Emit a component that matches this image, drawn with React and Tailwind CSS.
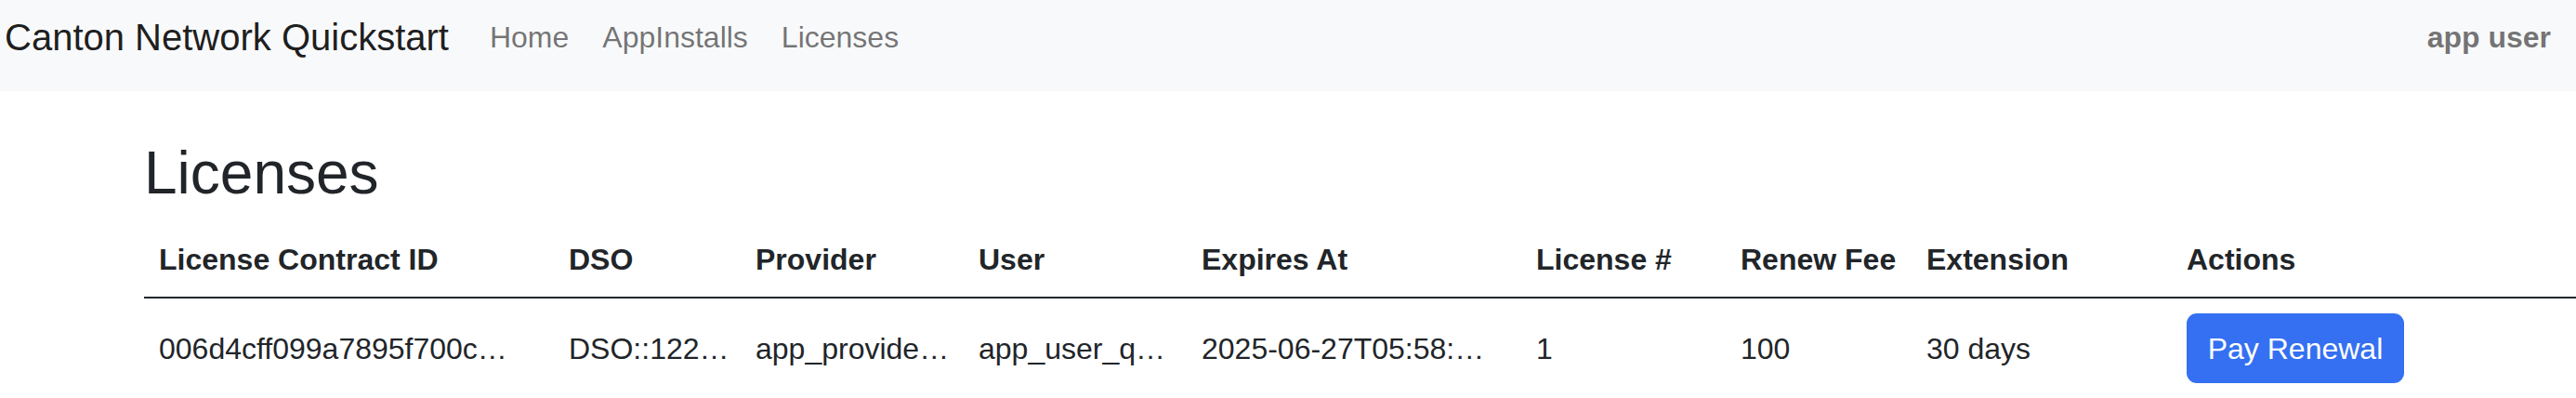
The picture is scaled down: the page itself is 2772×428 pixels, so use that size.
import React from "react";

const cols = [
  { h: "License Contract ID", v: "006d4cff099a7895f700c…", w: "w-[441px]" },
  { h: "DSO", v: "DSO::122…", w: "w-[201px]" },
  { h: "Provider", v: "app_provide…", w: "w-[240px]" },
  { h: "User", v: "app_user_q…", w: "w-[240px]" },
  { h: "Expires At", v: "2025-06-27T05:58:…", w: "w-[360px]" },
  { h: "License #", v: "1", w: "w-[220px]" },
  { h: "Renew Fee", v: "100", w: "w-[200px]" },
  { h: "Extension", v: "30 days", w: "w-[280px]" },
];

export default function App() {
  return (
    <div className="min-h-[428px] w-[2772px] overflow-hidden bg-white text-[#212529] font-['Liberation_Sans',Arial,sans-serif]">
      <nav className="h-[98px] bg-[#f8f9fa]">
        <div className="flex h-[80px] items-center pl-[5px] pr-[27px]">
          <a className="mr-[26px] text-[40px] leading-[60px] text-[rgba(0,0,0,0.9)] whitespace-nowrap">
            Canton Network Quickstart
          </a>
          <ul className="flex items-center">
            {["Home", "AppInstalls", "Licenses"].map((l) => (
              <li key={l}>
                <a className="block px-[18px] text-[32px] leading-[48px] text-[rgba(0,0,0,0.55)] whitespace-nowrap">
                  {l}
                </a>
              </li>
            ))}
          </ul>
          <div className="ml-auto text-[32px] font-bold leading-[48px] text-[rgba(0,0,0,0.55)] whitespace-nowrap">
            app user
          </div>
        </div>
      </nav>

      <main className="pl-[155px]">
        <h2 className="mt-[50px] mb-[15px] h-[76px] text-[64px] font-medium leading-[76px]">
          Licenses
        </h2>
        <table className="w-full table-fixed border-collapse">
          <colgroup>
            {cols.map((c) => (
              <col key={c.h} className={c.w} />
            ))}
            <col />
          </colgroup>
          <thead>
            <tr className="border-b-2 border-[#212529]">
              {cols.map((c) => (
                <th
                  key={c.h}
                  className="overflow-hidden whitespace-nowrap px-[16px] py-[16px] text-left align-middle text-[32px] font-bold leading-[48px]"
                >
                  {c.h}
                </th>
              ))}
              <th className="px-[16px] py-[16px] text-left align-middle text-[32px] font-bold leading-[48px]">
                Actions
              </th>
            </tr>
          </thead>
          <tbody>
            <tr>
              {cols.map((c) => (
                <td
                  key={c.h}
                  className="overflow-hidden whitespace-nowrap px-[16px] py-[16px] align-middle text-[32px] leading-[48px]"
                >
                  {c.v}
                </td>
              ))}
              <td className="px-[16px] py-[16px] align-middle">
                <button className="flex h-[75px] w-[234px] items-center justify-center rounded-[11px] bg-[#3470f1] text-[32px] leading-[48px] text-white">
                  Pay Renewal
                </button>
              </td>
            </tr>
          </tbody>
        </table>
      </main>
    </div>
  );
}
